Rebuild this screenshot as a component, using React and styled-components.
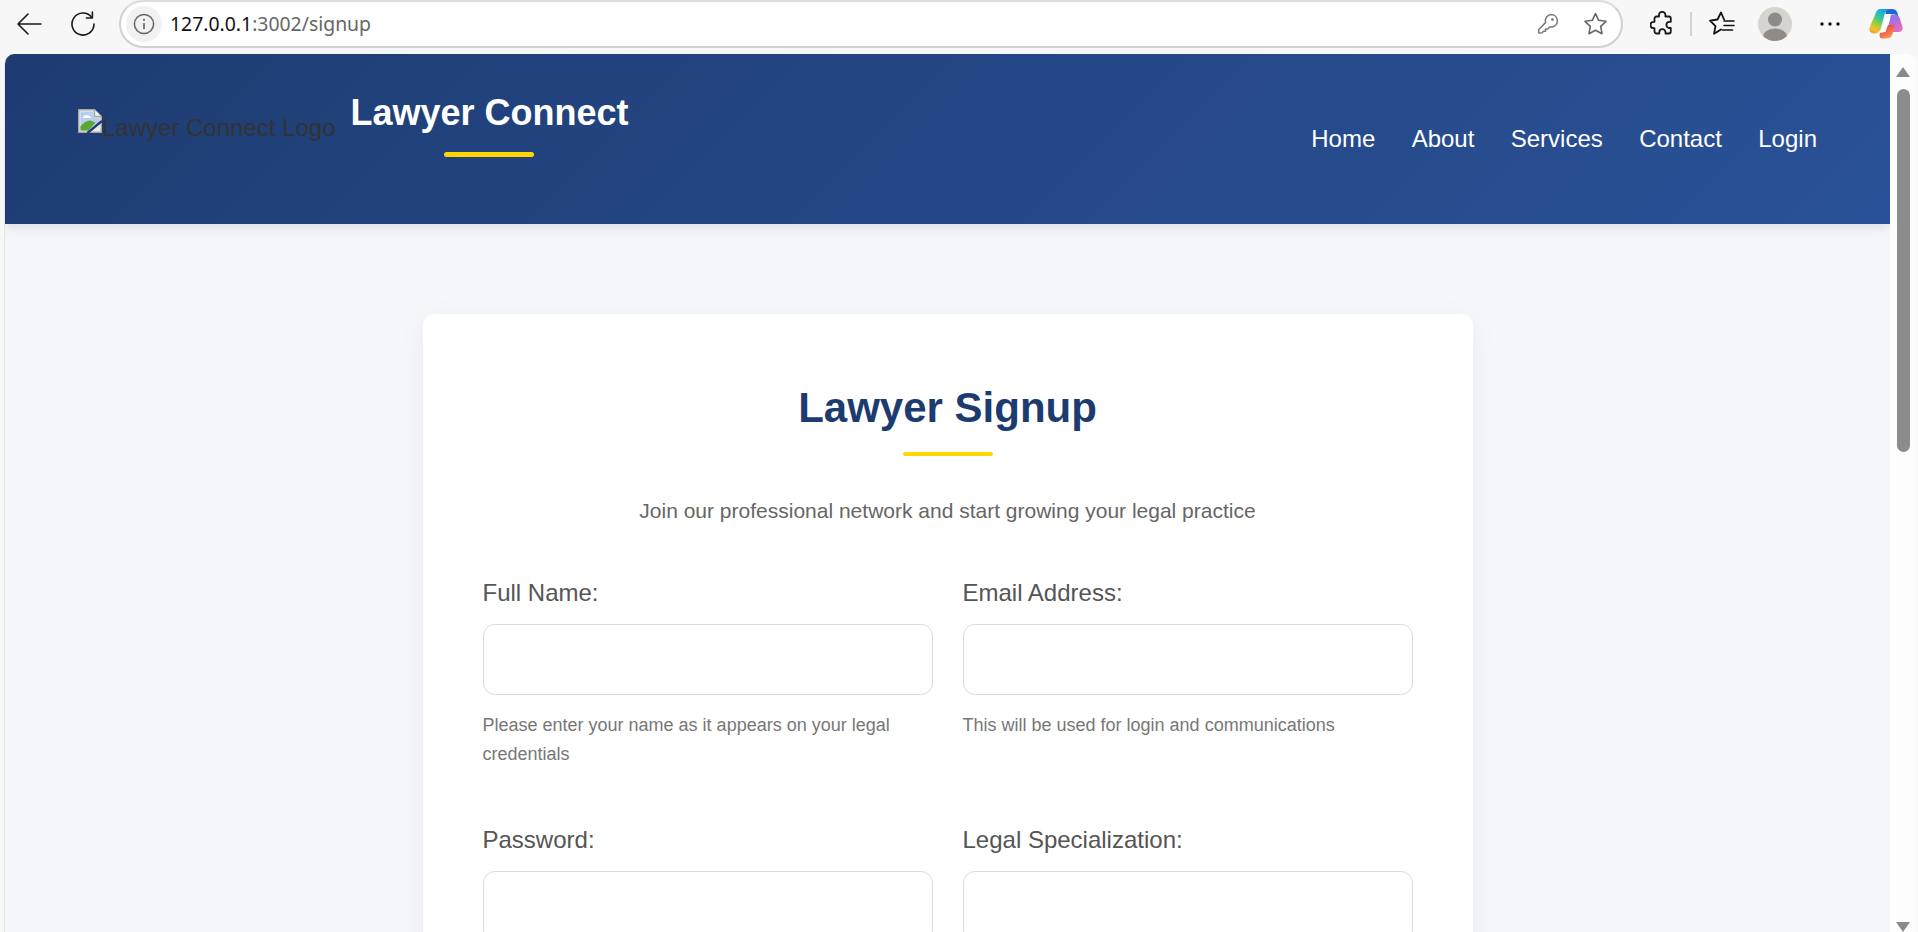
import React from "react";
import styled, { createGlobalStyle } from "styled-components";

const Global = createGlobalStyle`
  html, body { margin: 0; padding: 0; height: 932px; overflow: hidden; background: #f7f7f7; }
  body { font-family: "Liberation Sans", Arial, sans-serif; line-height: 1.6; color: #333; }
  * { box-sizing: border-box; }
`;

const Window = styled.div`
  width: 1918px; height: 932px; display: flex; flex-direction: column; overflow: hidden; background: #f7f7f7;
`;
const Toolbar = styled.div`
  height: 54px; flex: none; display: flex; align-items: flex-start; padding-left: 14px;
`;
const ToolIcon = styled.div`
  width: ${p => p.$w}px; height: 47px; flex: none; margin-left: ${p => p.$ml || 0}px;
  display: flex; align-items: center; justify-content: center;
`;
const AddressBar = styled.div`
  width: 1504px; height: 48px; flex: none; margin-left: 21px; background: #fff; border: 2px solid #d0d0d0; border-top-color: #dcdcdc;
  border-radius: 24px; display: flex; align-items: center; padding: 0 13px 0 5px;
`;
const InfoChip = styled.div`
  width: 36px; height: 36px; border-radius: 50%; background: #f1f1f1; flex: none;
  display: flex; align-items: center; justify-content: center;
`;
const Url = styled.div`
  margin-left: 8px; font-family: "Noto Sans", sans-serif; font-size: 19.4px; line-height: 24px; color: #666; flex: 1; white-space: nowrap;
`;
const Host = styled.span`color: #111;`;
const AddressActions = styled.div`display: flex; align-items: center; gap: 24px;`;
const Divider = styled.div`width: 2px; height: 24px; background: #d2d2d2; flex: none; margin-left: 16px; margin-top: 12px;`;

const Viewport = styled.div`
  flex: 1; min-height: 0; display: flex; width: 1913px; margin-left: 4px; border-left: 1px solid #e6e6e6;
  border-top-left-radius: 10px; border-top-right-radius: 12px; overflow: hidden; background: #fff;
`;
const Page = styled.div`
  width: 1885px; flex: none; background: #f5f7fb; overflow: hidden;
`;
const Scrollbar = styled.div`
  flex: 1; background: #fdfdfd; display: flex; flex-direction: column; align-items: center; padding-top: 13px; padding-right: 1px; overflow: hidden;
`;
const Arrow = styled.div`
  width: 0; height: 0; border-left: 7.5px solid transparent; border-right: 7.5px solid transparent; flex: none;
  ${p => p.$down ? "border-top: 10px solid #8a8a8a; margin-top: auto;" : "border-bottom: 10px solid #8a8a8a;"}
`;
const Thumb = styled.div`
  width: 13px; height: 363px; background: #8c8c8c; border-radius: 7px; margin-top: 12px; flex: none;
`;

const Header = styled.header`
  height: 170px; background: linear-gradient(135deg, #1e3c72 0%, #2a5298 100%);
  box-shadow: 0 4px 12px rgba(0,0,0,.1); display: flex; align-items: center; justify-content: space-between;
  padding: 0 73px; position: relative;
`;
const Brand = styled.div`display: flex; align-items: flex-start; gap: 15px; padding-bottom: 38px;`;
const LogoAlt = styled.div`
  display: flex; align-items: flex-start; margin-top: 26px; font-size: 24px; line-height: 38px; color: #333; white-space: nowrap;
`;
const BrandText = styled.div`display: flex; flex-direction: column; align-items: center; padding-top: 1px;`;
const BrandTitle = styled.h1`
  margin: 0; font-size: 36px; line-height: 58px; font-weight: 700; color: #fff; white-space: nowrap;
`;
const Rule = styled.div`
  width: 90px; height: ${p => p.$h || 5}px; border-radius: 3px; background: #ffd700; flex: none;
  margin-top: ${p => p.$mt}px; margin-right: ${p => p.$mr || 0}px;
`;
const Nav = styled.nav`display: flex; gap: 36.4px;`;
const NavLink = styled.a`color: #fff; font-size: 24px; line-height: 38px; white-space: nowrap;`;

const Card = styled.section`
  width: 1050px; margin: 90px auto 60px; background: #fff; border-radius: 12px; padding: 60px;
  box-shadow: 0 6px 30px rgba(0,0,0,.05);
`;
const CardHead = styled.div`display: flex; flex-direction: column; align-items: center;`;
const CardTitle = styled.h2`
  margin: 0; font-size: 42px; line-height: 67px; font-weight: 700; color: #1c3c70;
`;
const Subtitle = styled.p`
  margin: 38px 0 43px; font-size: 21px; line-height: 34px; color: #666; white-space: nowrap;
`;
const FormGrid = styled.div`display: grid; grid-template-columns: 450px 450px; column-gap: 30px; row-gap: 49px;`;
const Field = styled.div`display: flex; flex-direction: column; min-width: 0;`;
const Label = styled.label`font-size: 24px; line-height: 38px; color: #555; padding-top: 2.5px; margin-bottom: 12.5px;`;
const Input = styled.div`
  height: 71px; border: 1px solid #dcdcdc; border-radius: 12px; background: #fff; flex: none;
`;
const Hint = styled.div`margin-top: 16px; font-size: 18px; line-height: 29px; color: #777;`;

const stroke = { fill: "none", stroke: "#1a1a1a", strokeWidth: 1.6, strokeLinecap: "round", strokeLinejoin: "round" };
const gray = { fill: "none", stroke: "#7a7a7a", strokeWidth: 1.5, strokeLinecap: "round", strokeLinejoin: "round" };

const Back = () => (
  <svg width="26" height="24" viewBox="0 0 26 24"><path d="M25 12H2M12 2 2 12l10 10" {...stroke} /></svg>
);
const Reload = () => (
  <svg width="26" height="26" viewBox="0 0 26 26"><path d="M21.6 6.2A11 11 0 1 0 24 13" {...stroke} /><path d="M22.4 1v6h-6" {...stroke} /></svg>
);
const Info = () => (
  <svg width="22" height="22" viewBox="0 0 22 22">
    <circle cx="11" cy="11" r="9.6" fill="none" stroke="#666" strokeWidth="1.5" />
    <path d="M11 10v6" stroke="#666" strokeWidth="1.7" />
    <circle cx="11" cy="6.8" r="1.1" fill="#666" />
  </svg>
);
const Key = () => (
  <svg width="22" height="22" viewBox="0 0 22 22">
    <path d="M14 1.5a6.3 6.3 0 0 1 1.6 12.4 6 6 0 0 1-2.7-.1l-2.2 2.3H8.5v2.1H6.4l-1.2 1.6-3 .3-.6-.6.3-3.2 6.7-6.7A6.3 6.3 0 0 1 14 1.5Z" {...gray} />
    <circle cx="15.4" cy="6.6" r="1.4" fill="#7a7a7a" />
  </svg>
);
const Star = () => (
  <svg width="25" height="24" viewBox="0 0 25 24">
    <path d="M12.5 1.6 15.7 8.3l7.3 1-5.3 5.1 1.3 7.300-6.500-3.500-6.500 3.500 1.300-7.300L2 9.300l7.300-1Z" fill="none" stroke="#666" strokeWidth="1.6" strokeLinejoin="round" />
  </svg>
);
const Puzzle = () => (
  <svg width="24" height="25" viewBox="0 0 24 25">
    <path d="M9 5.500V4a3.200 3.200 0 0 1 6.400 0v1.500h3.400a2 2 0 0 1 2 2v3.300h-1.300a3.100 3.100 0 0 0 0 6.200h1.300v3.500a2 2 0 0 1-2 2h-3.300v-1.200a3.100 3.100 0 0 0-6.200 0v1.200H6.500a2 2 0 0 1-2-2v-3.300H3.700a3.200 3.200 0 0 1 0-6.400h.8V7.500a2 2 0 0 1 2-2Z" fill="none" stroke="#1a1a1a" strokeWidth="1.8" strokeLinejoin="round" />
  </svg>
);
const Favs = () => (
  <svg width="26" height="25" viewBox="0 0 26 25">
    <path d="M12 18.500 5 22.800l1.500-7.700L1 9.700l7.500-1.200L12 1.500l3.100 7" fill="none" stroke="#111" strokeWidth="1.8" strokeLinejoin="round" strokeLinecap="round" />
    <path d="M15 10h10M15 14.500h10M13.500 19h10" stroke="#111" strokeWidth="1.6" strokeLinecap="round" />
  </svg>
);
const Avatar = () => (
  <svg width="34" height="34" viewBox="0 0 34 34">
    <defs><clipPath id="av"><circle cx="17" cy="17" r="17" /></clipPath></defs>
    <circle cx="17" cy="17" r="17" fill="#d6d4d0" />
    <g clipPath="url(#av)" fill="#8f8c88">
      <circle cx="17" cy="12.500" r="7" />
      <ellipse cx="17" cy="30" rx="12" ry="8.500" />
    </g>
  </svg>
);
const Dots = () => (
  <svg width="20" height="4" viewBox="0 0 20 4"><circle cx="2" cy="2" r="1.700" fill="#111" /><circle cx="10" cy="2" r="1.700" fill="#111" /><circle cx="18" cy="2" r="1.700" fill="#111" /></svg>
);
const Copilot = () => (
  <svg width="34" height="31" viewBox="0 0 34 31">
    <defs>
      <linearGradient id="cpA" x1="0.700" y1="0" x2="0.200" y2="1">
        <stop offset="0" stopColor="#1c9fe6" /><stop offset=".35" stopColor="#2fc6a8" /><stop offset=".6" stopColor="#8fd03c" /><stop offset=".85" stopColor="#f2c22e" /><stop offset="1" stopColor="#f59a2c" />
      </linearGradient>
      <linearGradient id="cpB" x1="0.100" y1="0" x2="0.800" y2="1">
        <stop offset="0" stopColor="#7a7cf0" /><stop offset=".5" stopColor="#b56be0" /><stop offset="1" stopColor="#ea70b8" />
      </linearGradient>
      <linearGradient id="cpC" x1="0.200" y1="0" x2="0.800" y2="1">
        <stop offset="0" stopColor="#e8403c" /><stop offset=".6" stopColor="#f5734a" /><stop offset="1" stopColor="#f8a868" />
      </linearGradient>
    </defs>
    <path d="M18 1h5c3 0 4.500 1.500 5.500 4l1 4c-2-2-4-3-6-3h-7c.5-2.500.5-4 1.500-5Z" fill="#1f66d8" />
    <path d="M22 6.500h3c3 0 5 1.500 6 4.500l2.500 8c.7 3-1 5-4 5H18Z" fill="url(#cpB)" />
    <path d="M11 25c3 0 5-1 6-4l2-4h7l-2.500 9c-1 3-3 4.500-6 4.500H13c-2 0-3-2-2-5.500Z" fill="url(#cpC)" />
    <path d="M11 1h10c-3 .5-4.500 2.500-5.500 5.500L12 20c-1 3-3 5.500-6 5.500H5C1.500 25.500-.5 22.500.8 19L7 4.500C8 2.300 9 1 11 1Z" fill="url(#cpA)" />
    <path d="M16.500 10h4.500L16.500 24H12Z" fill="#fff" />
  </svg>
);
const BrokenImage = () => (
  <svg width="24" height="24" viewBox="0 0 24 24" style={{ flex: "none" }}>
    <path d="M.7.700H16.500L23.300 7.500V23.300H.7Z" fill="#ececec" stroke="#a6a6a6" strokeWidth="1.400" />
    <path d="M2.500 2.500H15.500V8.500H21.500V14L12 21.500H2.500Z" fill="#b9cdf0" />
    <path d="M5 9c0-2 2-3 3.500-3s4 1 5 3Z" fill="#fff" />
    <path d="M2.500 21.500v-4c3-4 7-6.500 10-6l5 2-7 8Z" fill="#5aa832" />
    <path d="M16.500.700V7.500H23.300" fill="#f5f5f5" stroke="#a6a6a6" strokeWidth="1.400" />
    <path d="M24 12 9.500 24" stroke="#1f3e74" strokeWidth="2.400" />
  </svg>
);

export default function App() {
  return (
    <Window>
      <Global />
      <Toolbar>
        <ToolIcon $w={30}><Back /></ToolIcon>
        <ToolIcon $w={30} $ml={24}><Reload /></ToolIcon>
        <AddressBar>
          <InfoChip><Info /></InfoChip>
          <Url><Host>127.0.0.1</Host>:3002/signup</Url>
          <AddressActions><Key /><Star /></AddressActions>
        </AddressBar>
        <ToolIcon $w={24} $ml={27}><Puzzle /></ToolIcon>
        <Divider />
        <ToolIcon $w={26} $ml={17}><Favs /></ToolIcon>
        <ToolIcon $w={34} $ml={23}><Avatar /></ToolIcon>
        <ToolIcon $w={20} $ml={28}><Dots /></ToolIcon>
        <ToolIcon $w={34} $ml={29}><Copilot /></ToolIcon>
      </Toolbar>
      <Viewport>
        <Page>
          <Header>
            <Brand>
              <LogoAlt><BrokenImage />Lawyer Connect Logo</LogoAlt>
              <BrandText>
                <BrandTitle>Lawyer Connect</BrandTitle>
                <Rule $mt={10} $mr={2} />
              </BrandText>
            </Brand>
            <Nav>
              {["Home", "About", "Services", "Contact", "Login"].map(n => <NavLink key={n}>{n}</NavLink>)}
            </Nav>
          </Header>
          <Card>
            <CardHead>
              <CardTitle>Lawyer Signup</CardTitle>
              <Rule $mt={11} $h={4} />
              <Subtitle>Join our professional network and start growing your legal practice</Subtitle>
            </CardHead>
            <FormGrid>
              <Field>
                <Label>Full Name:</Label>
                <Input />
                <Hint>Please enter your name as it appears on your legal credentials</Hint>
              </Field>
              <Field>
                <Label>Email Address:</Label>
                <Input />
                <Hint>This will be used for login and communications</Hint>
              </Field>
              <Field>
                <Label>Password:</Label>
                <Input />
              </Field>
              <Field>
                <Label>Legal Specialization:</Label>
                <Input />
              </Field>
            </FormGrid>
          </Card>
        </Page>
        <Scrollbar>
          <Arrow />
          <Thumb />
          <Arrow $down />
        </Scrollbar>
      </Viewport>
    </Window>
  );
}
